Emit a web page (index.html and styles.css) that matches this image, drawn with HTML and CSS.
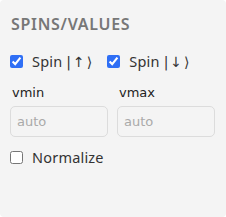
FILE: index.html
```html
<!DOCTYPE html>
<html lang="en">
<head>
  <meta charset="UTF-8" />
  <title>Spins / Values</title>
  <link rel="stylesheet" href="styles.css">
</head>
<body>
  <div class="panel">
    <h3 class="panel-title">SPINS/VALUES</h3>

    <div class="spin-row">
      <label class="check">
        <input type="checkbox" checked />
        <span>Spin <span class="ket">|↑⟩</span></span>
      </label>
      <label class="check">
        <input type="checkbox" checked />
        <span>Spin <span class="ket">|↓⟩</span></span>
      </label>
    </div>

    <div class="range-row">
      <div class="field">
        <label for="vmin">vmin</label>
        <input type="text" id="vmin" placeholder="auto" />
      </div>
      <div class="field">
        <label for="vmax">vmax</label>
        <input type="text" id="vmax" placeholder="auto" />
      </div>
    </div>

    <label class="check">
      <input type="checkbox" />
      <span>Normalize</span>
    </label>
  </div>
</body>
</html>
```

FILE: styles.css
```css
* {
  box-sizing: border-box;
  margin: 0;
  padding: 0;
}

body {
  background: #ffffff;
  width: 226px;
  height: 217px;
}

.panel {
  background: #f4f4f4;
  border-radius: 4px;
  height: 217px;
  padding: 13px 10px 10px 10px;
  font-family: "Noto Sans", sans-serif;
  color: #333;
}

.panel-title {
  font-size: 16px;
  font-weight: 600;
  color: #777;
  letter-spacing: 0.7px;
  margin-left: 1px;
  margin-bottom: 16px;
}

.check {
  display: flex;
  align-items: center;
  gap: 9px;
  font-size: 14.5px;
  color: #333;
  letter-spacing: 0.2px;
}

.check input {
  width: 13px;
  height: 13px;
  accent-color: #2f6ff5;
  margin: 0;
}

.ket {
  font-family: "DejaVu Sans", sans-serif;
  font-size: 14px;
  letter-spacing: 2px;
}

.spin-row {
  display: flex;
  gap: 13px;
  margin-bottom: 14px;
}

.range-row {
  display: flex;
  gap: 9px;
  margin-bottom: 10px;
}

.field {
  display: flex;
  flex-direction: column;
  width: 98px;
}

.field label {
  font-family: "DejaVu Sans", sans-serif;
  font-size: 13px;
  letter-spacing: 0;
  color: #222;
  margin-left: 2px;
  margin-bottom: 6px;
}

.field input {
  width: 98px;
  height: 31px;
  border: 1px solid #dcdcdc;
  border-radius: 5px;
  background: #f4f4f4;
  padding: 0 6px;
  font-family: "DejaVu Sans", sans-serif;
  font-size: 13px;
  outline: none;
}

.field input::placeholder {
  color: #aaa;
}
```
